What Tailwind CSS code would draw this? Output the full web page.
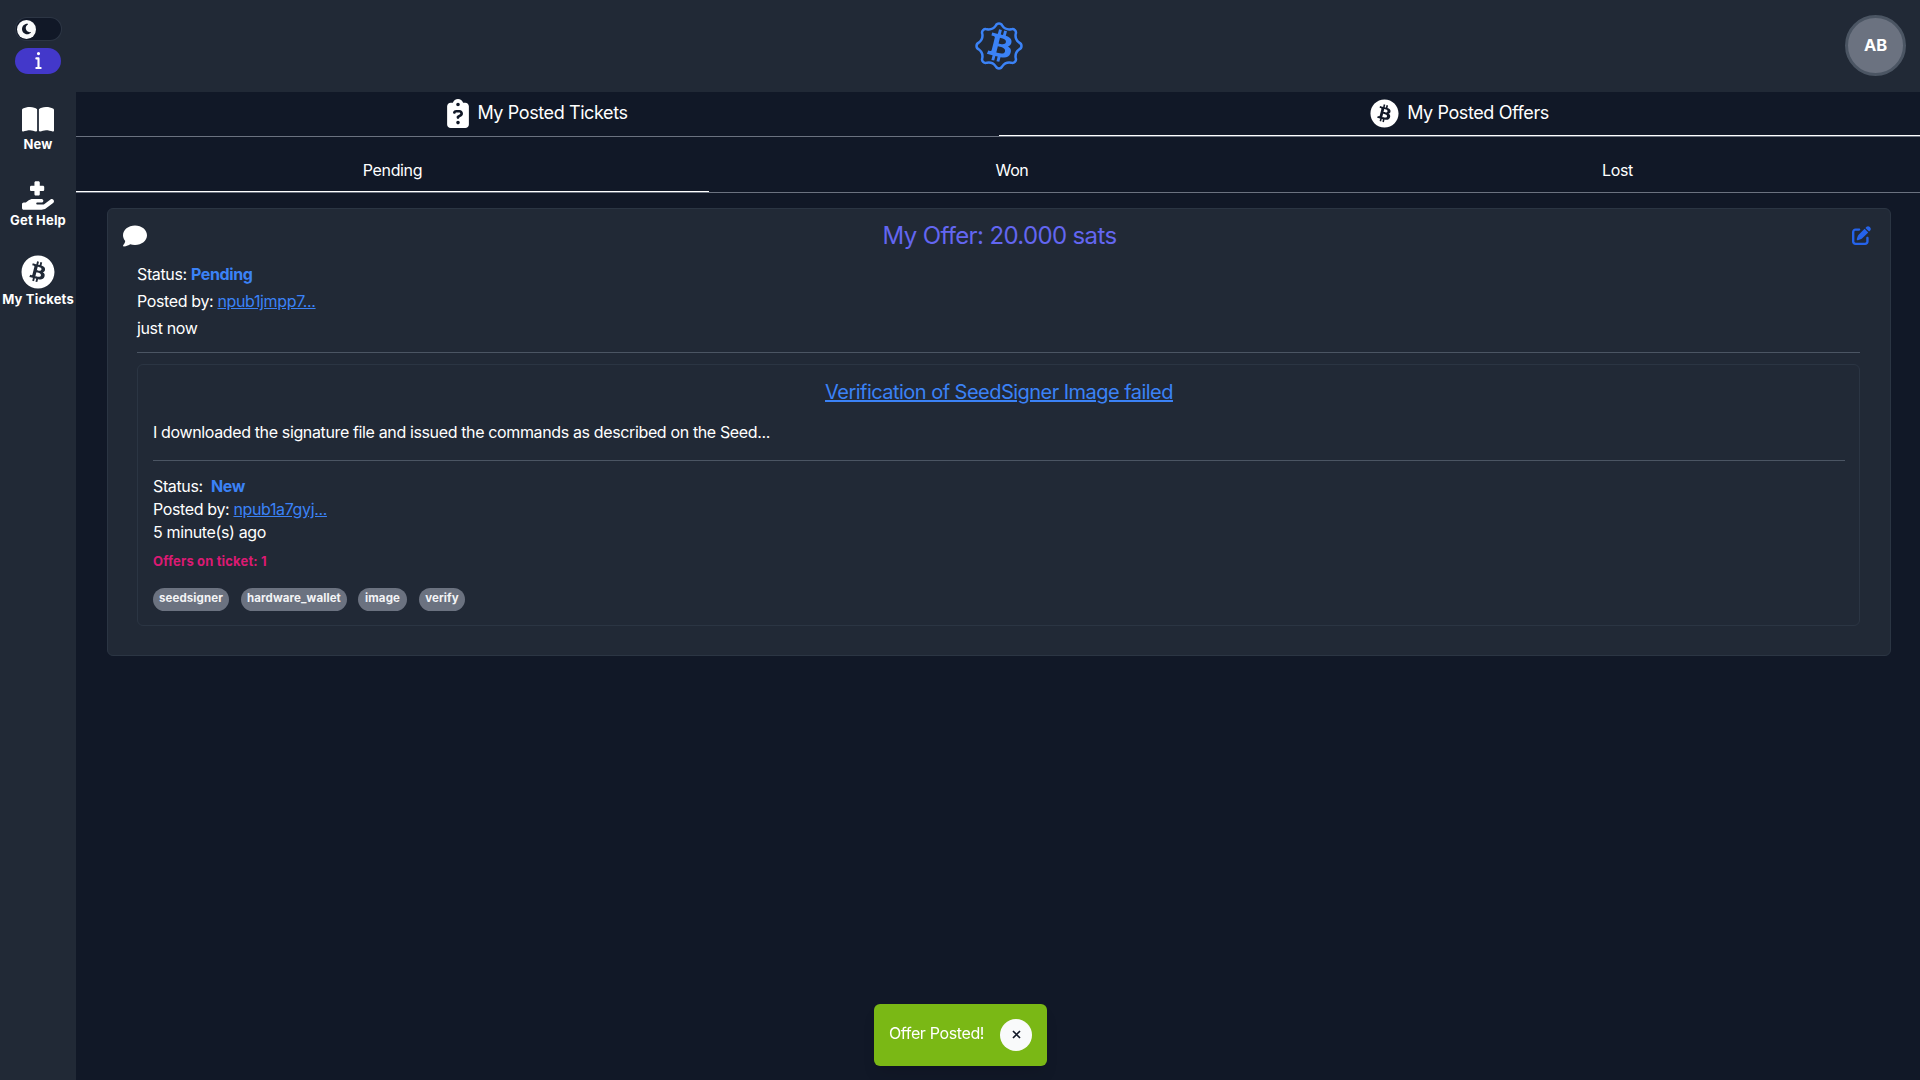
<!DOCTYPE html>
<html lang="en">
<head>
<meta charset="utf-8">
<title>My Posted Offers</title>
<script src="https://cdn.jsdelivr.net/npm/@tailwindcss/browser@4"></script>
</head>
<body class="h-screen overflow-hidden bg-[#111827] font-['Inter',sans-serif] text-base tracking-[-0.365px] text-white">
<svg class="hidden">
  <symbol id="bitcoin" viewBox="0 0 512 512"><path fill="currentColor" d="M504 256c0 136.967-111.033 248-248 248S8 392.967 8 256 119.033 8 256 8s248 111.033 248 248zm-141.651-35.33c4.937-32.999-20.191-50.739-54.55-62.573l11.146-44.702-27.213-6.781-10.851 43.524c-7.154-1.783-14.502-3.464-21.803-5.13l10.929-43.81-27.198-6.781-11.153 44.686c-5.922-1.349-11.735-2.682-17.377-4.084l.031-.14-37.53-9.37-7.239 29.062s20.191 4.627 19.765 4.913c11.022 2.751 13.014 10.044 12.68 15.825l-12.696 50.925c.76.194 1.744.473 2.829.907-.907-.225-1.876-.473-2.876-.713l-17.796 71.338c-1.349 3.348-4.767 8.37-12.471 6.464.271.395-19.78-4.937-19.78-4.937l-13.51 31.147 35.414 8.827c6.588 1.651 13.045 3.379 19.4 5.006l-11.262 45.213 27.182 6.781 11.153-44.733a1038.209 1038.209 0 0 0 21.687 5.627l-11.115 44.523 27.213 6.781 11.262-45.128c46.404 8.781 81.299 5.239 95.986-36.727 11.834-33.79-.589-53.281-25.004-65.991 17.78-4.098 31.174-15.792 34.747-39.949zm-62.177 87.179c-8.41 33.79-65.308 15.523-83.755 10.943l14.944-59.899c18.446 4.603 77.6 13.717 68.811 48.956zm8.417-87.667c-7.673 30.736-55.031 15.12-70.393 11.292l13.548-54.327c15.363 3.828 64.836 10.973 56.845 43.035z"/></symbol>
</svg>
<div class="flex h-full">
  <aside class="flex w-[76px] shrink-0 flex-col items-center bg-[#212936] pt-[17px]">
    <div class="flex h-6 w-[47px] items-center rounded-full border border-[#374151]/70 bg-[#111827] px-px">
      <div class="flex size-[19px] items-center justify-center rounded-full bg-[#f9fafb] text-[#111827]">
        <svg class="h-[12px] w-[11px]" viewBox="0 0 384 512"><path fill="currentColor" d="M223.5 32C100 32 0 132.3 0 256S100 480 223.5 480c60.6 0 115.5-24.2 155.8-63.4c5-4.9 6.3-12.5 3.1-18.7s-10.1-9.7-17-8.5c-9.8 1.7-19.8 2.6-30.1 2.6c-96.9 0-175.5-78.8-175.5-176c0-65.8 36-123.1 89.3-153.3c6.1-3.5 9.2-10.5 7.7-17.3s-7.3-11.9-14.3-12.5c-6.3-.5-12.6-.8-19-.8z"/></svg>
      </div>
    </div>
    <div class="mt-[7px] flex h-[26px] w-[46px] items-center justify-center rounded-full bg-[#4338ca] pb-px">
      <svg class="h-[17px] w-[7px]" viewBox="0 0 192 512"><path fill="currentColor" d="M48 48a48 48 0 1 1 96 0A48 48 0 1 1 48 48zM0 192c0-17.700 14.300-32 32-32H96c17.700 0 32 14.300 32 32V448h32c17.700 0 32 14.300 32 32s-14.300 32-32 32H32c-17.700 0-32-14.300-32-32s14.300-32 32-32H64V224H32c-17.700 0-32-14.300-32-32z"/></svg>
    </div>
    <nav class="flex flex-col items-center text-[13px] leading-5 font-bold tracking-[0.18px] whitespace-nowrap">
      <a class="mt-[31px] flex flex-col items-center">
        <svg class="h-[29px] w-8" viewBox="0 0 576 512"><path fill="currentColor" d="M249.6 471.5c10.8 3.8 22.4-4.1 22.4-15.5V78.6c0-4.2-1.6-8.4-5-11C247.4 52 202.4 32 144 32C93.5 32 46.3 45.3 18.1 56.1C6.8 60.5 0 71.7 0 83.8V454.1c0 11.9 12.800 20.200 24.100 16.500C55.600 460.100 105.500 448 144 448c33.900 0 79 14 105.600 23.500zm76.800 0C353 462 398.100 448 432 448c38.500 0 88.400 12.100 119.900 22.600c11.300 3.800 24.100-4.600 24.100-16.500V83.800c0-12.100-6.800-23.300-18.100-27.600C529.700 45.300 482.500 32 432 32c-58.400 0-103.400 20-123 35.600c-3.300 2.600-5 6.800-5 11V456c0 11.400 11.700 19.300 22.400 15.500z"/></svg>
        <span>New</span>
      </a>
      <a class="mt-[27px] flex flex-col items-center">
        <svg class="h-[29px] w-8" viewBox="0 0 576 512"><path fill="currentColor" d="M224 24V80H168c-13.300 0-24 10.700-24 24v48c0 13.300 10.700 24 24 24h56v56c0 13.300 10.700 24 24 24h48c13.300 0 24-10.700 24-24V176h56c13.300 0 24-10.700 24-24V104c0-13.300-10.700-24-24-24H320V24c0-13.300-10.700-24-24-24H248c-13.300 0-24 10.700-24 24zM559.700 392.200c17.800-13.100 21.600-38.100 8.500-55.900s-38.100-21.600-55.900-8.500L392.600 416H272c-8.800 0-16-7.200-16-16s7.200-16 16-16h80c17.700 0 32-14.300 32-32s-14.300-32-32-32H193.700c-29.100 0-57.300 9.900-80 28L68.800 384H32c-17.700 0-32 14.300-32 32v64c0 17.700 14.300 32 32 32H352.500c29 0 57.300-9.300 80.700-26.500l126.500-93.300z"/></svg>
        <span>Get Help</span>
      </a>
      <a class="mt-[25px] flex flex-col items-center">
        <svg class="size-[34px]"><use href="#bitcoin"/></svg>
        <span>My Tickets</span>
      </a>
    </nav>
  </aside>

  <div class="flex min-w-0 flex-1 flex-col">
    <header class="grid h-[92px] shrink-0 grid-cols-3 items-center bg-[#212936] pr-[14px]">
      <span></span>
      <svg class="ml-[15px] size-[52px] justify-self-center text-[#3b82f6]" viewBox="-26 -26 52 52">
        <path fill="none" stroke="currentColor" stroke-width="2.500" stroke-linejoin="round" d="M-3.250-20.350C-2-23.200 2-23.200 3.250-20.350Q6.500-15.700 12.100-16.700C15-17.800 17.800-15 16.700-12.100Q15.700-6.500 20.350-3.250C23.200-2 23.200 2 20.350 3.250Q15.700 6.500 16.700 12.100C17.800 15 15 17.800 12.100 16.700Q6.500 15.700 3.250 20.350C2 23.200-2 23.200-3.250 20.350Q-6.500 15.700-12.100 16.700C-15 17.800-17.800 15-16.700 12.100Q-15.700 6.500-20.350 3.250C-23.200 2-23.200-2-20.350-3.250Q-15.700-6.500-16.700-12.100C-17.800-15-15-17.800-12.100-16.700Q-6.500-15.700-3.250-20.350Z"/>
        <g transform="translate(.8 0) scale(.104) translate(-250 -256)"><path fill="currentColor" d="M362.349 220.67c4.937-32.999-20.191-50.739-54.55-62.573l11.146-44.702-27.213-6.781-10.851 43.524c-7.154-1.783-14.502-3.464-21.803-5.13l10.929-43.81-27.198-6.781-11.153 44.686c-5.922-1.349-11.735-2.682-17.377-4.084l.031-.14-37.53-9.37-7.239 29.062s20.191 4.627 19.765 4.913c11.022 2.751 13.014 10.044 12.68 15.825l-12.696 50.925c.76.194 1.744.473 2.829.907-.907-.225-1.876-.473-2.876-.713l-17.796 71.338c-1.349 3.348-4.767 8.37-12.471 6.464.271.395-19.78-4.937-19.78-4.937l-13.51 31.147 35.414 8.827c6.588 1.651 13.045 3.379 19.4 5.006l-11.262 45.213 27.182 6.781 11.153-44.733a1038.209 1038.209 0 0 0 21.687 5.627l-11.115 44.523 27.213 6.781 11.262-45.128c46.404 8.781 81.299 5.239 95.986-36.727 11.834-33.79-.589-53.281-25.004-65.991 17.78-4.098 31.174-15.792 34.747-39.949zm-62.177 87.179c-8.41 33.79-65.308 15.523-83.755 10.943l14.944-59.899c18.446 4.603 77.6 13.717 68.811 48.956zm8.417-87.667c-7.673 30.736-55.031 15.12-70.393 11.292l13.548-54.327c15.363 3.828 64.836 10.973 56.845 43.035z"/></g>
      </svg>
      <div class="-mt-px flex size-[61px] items-center justify-center justify-self-end rounded-full border-3 border-[#4b5563] bg-[#6b7280] pb-px text-[16.500px] font-bold tracking-normal">AB</div>
    </header>

    <div class="flex h-[45px] shrink-0 border-b border-[#6b7280] text-lg leading-6 tracking-[-0.400px]">
      <div class="flex w-[923px] items-center justify-center gap-2 pb-px">
        <svg class="h-[29px] w-[22px]" viewBox="0 0 384 512"><path fill="currentColor" d="M192 0c-41.800 0-77.400 26.700-90.500 64H64C28.700 64 0 92.700 0 128V448c0 35.300 28.700 64 64 64H320c35.300 0 64-28.700 64-64V128c0-35.300-28.700-64-64-64H282.500C269.400 26.700 233.800 0 192 0zm0 64a32 32 0 1 1 0 64 32 32 0 1 1 0-64zM105.800 229.300c7.900-22.300 29.100-37.300 52.800-37.300h58.300c34.900 0 63.100 28.300 63.100 63.100c0 22.600-12.100 43.500-31.700 54.800L216 328.400c-.2 13-10.900 23.600-24 23.600c-13.300 0-24-10.700-24-24V314.500c0-8.600 4.600-16.500 12.100-20.800l44.300-25.400c4.700-2.700 7.600-7.700 7.600-13.100c0-8.400-6.800-15.100-15.100-15.100H158.600c-3.400 0-6.400 2.100-7.500 5.300l-.4 1.200c-4.400 12.500-18.200 19-30.600 14.600s-19-18.200-14.600-30.600l.3-1.200zM160 416a32 32 0 1 1 64 0 32 32 0 1 1 -64 0z"/></svg>
        <span class="-mt-px">My Posted Tickets</span>
      </div>
      <div class="flex flex-1 items-center justify-center gap-2 border-b border-white pb-px">
        <svg class="size-[29px]"><use href="#bitcoin"/></svg>
        <span class="-mt-px">My Posted Offers</span>
      </div>
    </div>

    <div class="mt-4 flex h-10 shrink-0 border-b border-[#6b7280] text-center leading-6">
      <div class="w-[633px] border-b border-white pt-[5px]">Pending</div>
      <div class="w-[606px] pt-[5px]">Won</div>
      <div class="flex-1 pt-[5px]">Lost</div>
    </div>

    <main class="mt-[15px] mr-[29px] ml-[31px] h-[448px] shrink-0 rounded-md border border-[#2b3543] bg-[#212936] pr-[30px] pl-[29px]">
      <div class="-mx-[14px] flex h-[54px] items-center justify-between">
        <svg class="size-[24px]" viewBox="0 0 512 512"><path fill="currentColor" d="M512 240c0 114.900-114.600 208-256 208c-37.100 0-72.300-6.400-104.100-17.900c-11.900 8.700-31.300 20.600-54.300 30.600C73.600 471.100 44.700 480 16 480c-6.500 0-12.300-3.900-14.800-9.900c-2.500-6-1.100-12.800 3.400-17.400l.3-.3c.3-.3 .7-.7 1.300-1.400c1.100-1.200 2.800-3.100 4.900-5.700c4.100-5 9.600-12.400 15.200-21.600c10-16.600 19.500-38.400 21.400-62.900C17.700 326.800 0 285.100 0 240C0 125.100 114.600 32 256 32s256 93.100 256 208z"/></svg>
        <h1 class="text-2xl tracking-[-0.640px] text-[#6366f1]">My Offer: 20.000 sats</h1>
        <svg class="mr-[3px] mb-px size-[19px] text-[#2563eb]" viewBox="0 0 512 512"><path fill="currentColor" d="M471.600 21.700c-21.900-21.900-57.300-21.900-79.200 0L362.300 51.700l97.900 97.900 30.100-30.100c21.900-21.900 21.900-57.300 0-79.200L471.600 21.700zm-299.200 220c-6.100 6.100-10.800 13.600-13.500 21.900l-29.600 88.800c-2.900 8.600-.6 18.100 5.800 24.600s15.900 8.700 24.600 5.800l88.800-29.600c8.200-2.700 15.700-7.400 21.900-13.500L437.700 172.300 339.700 74.300 172.400 241.700zM96 64C43 64 0 107 0 160V416c0 53 43 96 96 96H352c53 0 96-43 96-96V320c0-17.700-14.300-32-32-32s-32 14.300-32 32v96c0 17.700-14.300 32-32 32H96c-17.700 0-32-14.300-32-32V160c0-17.700 14.300-32 32-32h96c17.700 0 32-14.300 32-32s-14.300-32-32-32H96z"/></svg>
      </div>
      <div class="leading-[27px]">
        <p class="-mt-[2px]">Status: <strong class="text-[#3b82f6]">Pending</strong></p>
        <p>Posted by: <a class="text-[#3b82f6] underline">npub1jmpp7...</a></p>
        <p>just now</p>
        <hr class="mt-[10px] border-[#4b5563]">
      </div>
      <section class="mt-[11px] h-[262px] rounded-md border border-[#2b3543] pr-[14px] pl-[15px]">
        <h2 class="pt-[13px] text-center text-xl leading-7 tracking-[-0.530px] text-[#3b82f6] underline">Verification of SeedSigner Image failed</h2>
        <p class="mt-[14px] leading-6">I downloaded the signature file and issued the commands as described on the Seed...</p>
        <hr class="mt-4 border-[#4b5563]">
        <div class="mt-[14px] leading-[23px]">
          <p>Status: <strong class="ml-[4px] text-[#3b82f6]">New</strong></p>
          <p>Posted by: <a class="text-[#3b82f6] underline">npub1a7gyj...</a></p>
          <p>5 minute(s) ago</p>
        </div>
        <p class="mt-[7px] text-[13px] leading-5 font-bold tracking-[0.160px] text-[#db1a73]">Offers on ticket: 1</p>
        <div class="mt-[17px] flex text-[11.500px] leading-[21px] font-bold tracking-[0.100px] text-[#f3f4f6]">
          <span class="h-[23px] w-[76px] rounded-full bg-[#6b7280] text-center">seedsigner</span>
          <span class="ml-3 h-[23px] w-[106px] rounded-full bg-[#6b7280] text-center">hardware_wallet</span>
          <span class="ml-[11px] h-[23px] w-[49px] rounded-full bg-[#6b7280] text-center">image</span>
          <span class="ml-3 h-[23px] w-[46px] rounded-full bg-[#6b7280] text-center">verify</span>
        </div>
      </section>
    </main>
  </div>
</div>

<div class="fixed top-[1004px] left-[874px] flex h-[62px] w-[173px] items-center justify-between rounded-md bg-[#7ab815] pr-[15px] pl-[15px] shadow-lg">
  <span class="-mt-1">Offer Posted!</span>
  <span class="flex size-8 items-center justify-center rounded-full bg-[#f9fafb] pb-[2px]">
    <svg class="size-[9px] text-[#111827]" viewBox="0 0 9 9"><path stroke="currentColor" stroke-width="1.700" d="M1 1l7 7M8 1l-7 7"/></svg>
  </span>
</div>
</body>
</html>
